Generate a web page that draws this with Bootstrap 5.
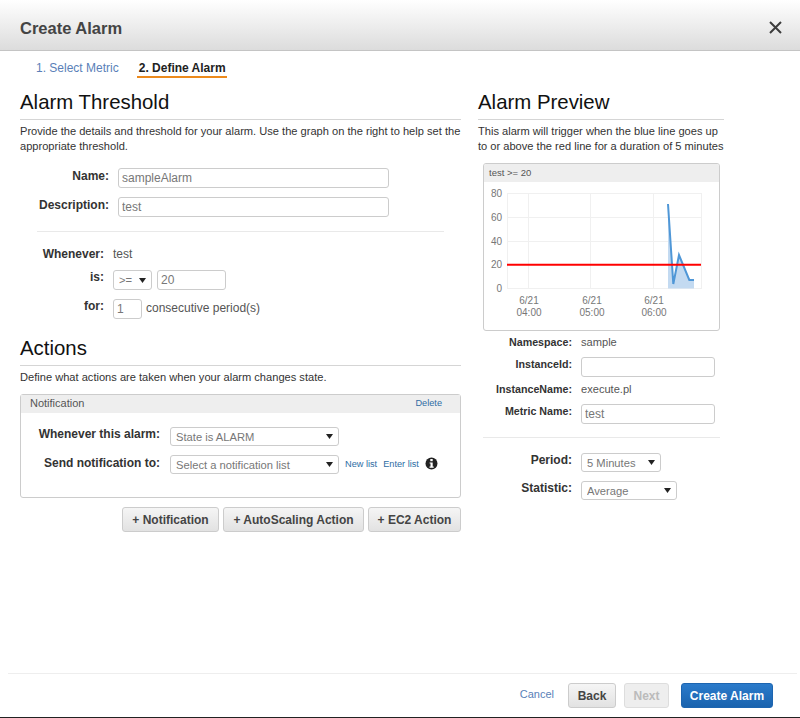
<!DOCTYPE html>
<html lang="en">
<head>
<meta charset="utf-8">
<title>Create Alarm</title>
<link href="https://cdn.jsdelivr.net/npm/bootstrap@5.3.0/dist/css/bootstrap.min.css" rel="stylesheet">
<style>
html,body{height:718px;overflow:hidden}
body{font-family:"Liberation Sans",Arial,sans-serif;font-size:12px;line-height:15px;color:#333;background:#fff}
.dlg{height:718px;border-bottom:1px solid #222}
.dlg-head{height:51px;padding:5px 18px 0 20px;background:linear-gradient(#fff,#dcdcdc);border-bottom:1px solid #c4c4c4}
.dlg-title{font-size:16.5px;font-weight:700;color:#444;margin:0;line-height:20px}
.steps{height:33px;padding:2px 0 0 36px;gap:18px;font-size:12px}
.steps a{color:#5a7fb8;text-decoration:none;padding:0 0 1px}
.steps .on{color:#222;font-weight:700;border-bottom:2px solid #ec8a1c;padding:1px 1px 0 2px;margin-top:1px}
.cols{padding-left:20px;padding-top:6px;gap:17px}
.col-l{width:441px}
.col-r{width:246px}
.sect{font-size:20.4px;line-height:24px;color:#111;font-weight:400;margin:0;padding-bottom:5px;border-bottom:1px solid #d5d5d5}
.intro{margin:4px 0 0;color:#333;line-height:15px;font-size:11.1px}
.frm{display:flex;align-items:flex-start}
.lbl{font-weight:700;color:#333;text-align:right;flex:none}
.ctl{border:1px solid #ccc;border-radius:3px;height:20px;padding:1px 3px 1px 3px;font:12px "Liberation Sans",Arial,sans-serif;color:#777;background:#fff;outline:0;display:block}
.drop{appearance:none;-webkit-appearance:none;padding-left:5px;font-size:11.2px;background-image:url("data:image/svg+xml,%3Csvg xmlns='http://www.w3.org/2000/svg' width='7' height='5'%3E%3Cpath d='M0 0h7L3.5 5z' fill='%23222'/%3E%3C/svg%3E");background-repeat:no-repeat;background-position:right 5px center}
.w-name{width:271px}
.w-ctl{width:69px;margin-left:5px}
.w-op{width:39px}
.w-per{width:29px}
.w-sel{width:169px}
.w-inst{width:134px}
.w-p{width:80px;height:19px}
.w-s{width:96px;height:19px}
.thr .lbl{width:89px;margin-right:9px;padding-top:1px}
.top-thr{margin-top:14px}
.mt-desc{margin-top:9px}
.hr1{height:1px;background:#e9e9e9;margin:14px 17px 15px 17px}
.wh .lbl{width:84px;margin-right:9px}
.wh-v{color:#555}
.wh-2{margin-top:8px}
.wh-3{margin-top:9px}
.txt-c{margin-left:4px;color:#555;padding-top:2px}
.act-h{margin-top:17px}
.panel{border:1px solid #ccc;border-radius:3px;height:104px;margin-top:9px}
.panel-h{background:#eee;height:18px;line-height:17px;padding:0 18px 0 9px;color:#555;font-size:11px}
.panel-h a,.lnk{color:#2e6da4;text-decoration:none;font-size:9.2px}
.panel-b{padding:14px 0 0 0}
.panel-b .lbl{width:139px;margin-right:10px}
.row2{margin-top:9px}
.row2 .lbl{padding-top:1px}
.panel-b .ctl{height:19px}
.lnks{gap:6px;margin-left:6px;padding-top:2px}
.btnrow{gap:4px;margin-top:9px}
.awsb{font:700 12px "Liberation Sans",Arial,sans-serif;height:25px;padding:0;color:#444;background:linear-gradient(#f5f5f5,#e2e2e2);border:1px solid #ccc;border-radius:3px}
.b1{width:97px}.b2{width:141px}.b3{width:93px}
.chart{margin:9px 0 0 5px;width:237px;height:168px;border:1px solid #ccc;border-radius:3px;overflow:hidden}
.chart-h{height:18px;line-height:17px;background:#eee;padding-left:5px;font-size:9.5px;color:#555}
.chart svg{display:block}
.rt .lbl{width:94px;margin-right:9px;font-size:10.7px}
.rt .wh-v{font-size:11.1px}
.rt-a{margin-top:4px}
.rt-b{margin-top:7px}
.rt-c{margin-top:5px}
.rt-d{margin-top:7px}
.hr2{height:1px;background:#e9e9e9;margin:13px 4px 15px 5px;width:237px}
.rt-e{margin-top:9px}
.rt .big{font-size:12px}
.dlg-foot{height:44px;margin:auto 3px 0 8px;border-top:1px solid #eee;padding:9px 24px 0 0}
.cancel{color:#5a7fb8;text-decoration:none;margin-right:14px;font-size:11px;position:relative;top:-6px}
.back{width:48px;margin-right:8px}
.next{width:45px;color:#bbb;background:#eee;border-color:#ddd;margin-right:12px}
.create{width:92px;color:#fff;background:linear-gradient(#2b7bcb,#1a63ae);border-color:#1d65b0}
</style>
</head>
<body>
<div class="dlg d-flex flex-column">
  <div class="dlg-head d-flex align-items-center justify-content-between">
    <h1 class="dlg-title">Create Alarm</h1>
    <svg width="13" height="13" viewBox="0 0 13 13" aria-label="Close"><path d="M1 1l11 11M12 1L1 12" stroke="#3c3c3c" stroke-width="2" fill="none"/></svg>
  </div>
  <div class="steps d-flex align-items-center">
    <a href="#">1. Select Metric</a>
    <a href="#" class="on">2. Define Alarm</a>
  </div>
  <div class="cols d-flex">
    <div class="col-l">
      <h2 class="sect">Alarm Threshold</h2>
      <p class="intro">Provide the details and threshold for your alarm. Use the graph on the right to help set the appropriate threshold.</p>
      <div class="thr top-thr">
        <div class="frm"><div class="lbl">Name:</div><input class="ctl w-name" value="sampleAlarm"></div>
        <div class="frm mt-desc"><div class="lbl">Description:</div><input class="ctl w-name" value="test"></div>
      </div>
      <div class="hr1"></div>
      <div class="wh">
        <div class="frm"><div class="lbl">Whenever:</div><div class="wh-v">test</div></div>
        <div class="frm wh-2"><div class="lbl">is:</div><select class="ctl drop w-op"><option>&gt;=</option></select><input class="ctl w-ctl" value="20"></div>
        <div class="frm wh-3"><div class="lbl">for:</div><input class="ctl w-per" value="1"><div class="txt-c">consecutive period(s)</div></div>
      </div>
      <h2 class="sect act-h">Actions</h2>
      <p class="intro">Define what actions are taken when your alarm changes state.</p>
      <div class="panel">
        <div class="panel-h d-flex justify-content-between"><span>Notification</span><a href="#">Delete</a></div>
        <div class="panel-b">
          <div class="frm"><div class="lbl">Whenever this alarm:</div><select class="ctl drop w-sel"><option>State is ALARM</option></select></div>
          <div class="frm row2"><div class="lbl">Send notification to:</div><select class="ctl drop w-sel"><option>Select a notification list</option></select>
            <div class="d-flex lnks"><a class="lnk" href="#">New list</a><a class="lnk" href="#">Enter list</a>
              <svg width="13" height="13" viewBox="0 0 13 13" aria-label="Info"><circle cx="6.5" cy="6.5" r="6" fill="#222"/><rect x="5.3" y="2" width="2.4" height="2.2" fill="#fff"/><path d="M4.6 5.4h3.1v4.1h1v1.2H4.5V9.5h1V6.6h-.9z" fill="#fff"/></svg>
            </div>
          </div>
        </div>
      </div>
      <div class="btnrow d-flex justify-content-end">
        <button class="awsb b1" type="button">+ Notification</button>
        <button class="awsb b2" type="button">+ AutoScaling Action</button>
        <button class="awsb b3" type="button">+ EC2 Action</button>
      </div>
    </div>
    <div class="col-r">
      <h2 class="sect">Alarm Preview</h2>
      <p class="intro">This alarm will trigger when the blue line goes up to or above the red line for a duration of 5 minutes</p>
      <div class="chart">
        <div class="chart-h">test &gt;= 20</div>
        <svg width="235" height="148" viewBox="484 182 235 148" font-family="Liberation Sans, Arial, sans-serif" font-size="10" fill="#777">
          <g stroke="#f0f0f0" stroke-width="1" fill="none">
            <path d="M507 193.5H701M507 217.5H701M507 241.5H701M507 264.5H701M507 288.5H701"/>
            <path d="M507.5 193V289M528.5 193V289M590.5 193V289M653.5 193V289M701.5 193V289"/>
          </g>
          <path d="M668 204L673.3 284L679 255L689.3 280H694V288.5H668Z" fill="#c3daf1"/>
          <path d="M668 204L673.3 284L679 255L689.3 280H694" fill="none" stroke="#4f97d7" stroke-width="2"/>
          <path d="M507 264.8H701" stroke="#f00" stroke-width="2"/>
          <g text-anchor="end"><text x="502" y="197">80</text><text x="502" y="221">60</text><text x="502" y="245">40</text><text x="502" y="268">20</text><text x="502" y="292">0</text></g>
          <g text-anchor="middle"><text x="529" y="304">6/21</text><text x="529" y="316">04:00</text><text x="592" y="304">6/21</text><text x="592" y="316">05:00</text><text x="654" y="304">6/21</text><text x="654" y="316">06:00</text></g>
        </svg>
      </div>
      <div class="rt">
        <div class="frm rt-a"><div class="lbl">Namespace:</div><div class="wh-v">sample</div></div>
        <div class="frm rt-b"><div class="lbl">InstanceId:</div><input class="ctl w-inst"></div>
        <div class="frm rt-c"><div class="lbl">InstanceName:</div><div class="wh-v">execute.pl</div></div>
        <div class="frm rt-d"><div class="lbl">Metric Name:</div><input class="ctl w-inst" value="test"></div>
        <div class="hr2"></div>
        <div class="frm"><div class="lbl big">Period:</div><select class="ctl drop w-p"><option>5 Minutes</option></select></div>
        <div class="frm rt-e"><div class="lbl big">Statistic:</div><select class="ctl drop w-s"><option>Average</option></select></div>
      </div>
    </div>
  </div>
  <div class="dlg-foot d-flex justify-content-end align-items-start">
    <a href="#" class="cancel align-self-center">Cancel</a>
    <button class="awsb back" type="button">Back</button>
    <button class="awsb next" type="button" disabled>Next</button>
    <button class="awsb create" type="button">Create Alarm</button>
  </div>
</div>
<script src="https://cdn.jsdelivr.net/npm/bootstrap@5.3.0/dist/js/bootstrap.bundle.min.js"></script>
</body>
</html>
